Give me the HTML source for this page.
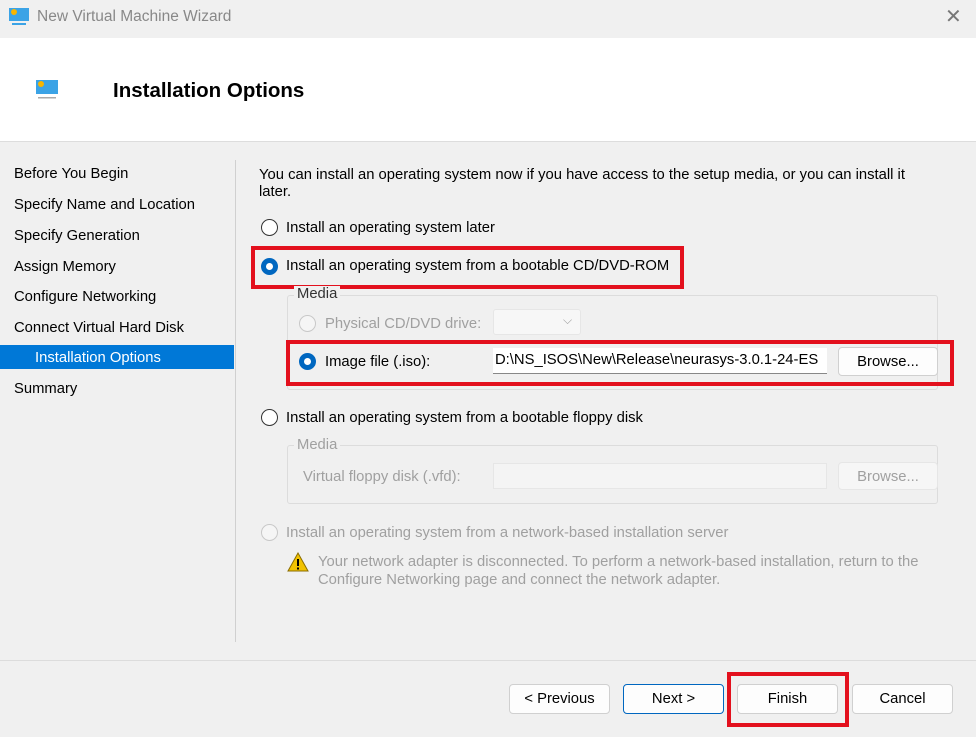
<!DOCTYPE html>
<html><head><meta charset="utf-8"><style>
*{margin:0;padding:0;box-sizing:border-box}
body{width:976px;height:737px;background:#f0f0f0;font-family:"Liberation Sans",sans-serif;font-size:14.8px;color:#000;position:relative;overflow:hidden}
.a{position:absolute;white-space:nowrap}
.g{color:#a0a0a0}
.rad{position:absolute;width:17px;height:17px;border-radius:50%;border:1.5px solid #333;background:#fff}
.rad.on{border:5px solid #0067c0}
.rad.dis{border-color:#c8c8c8;background:#f5f5f5}
.btn{position:absolute;height:30px;background:#fdfdfd;border:1px solid #d0d0d0;border-radius:4px;text-align:center;line-height:28px}
.red{position:absolute;border:4px solid #e3101d}
.box{position:absolute;border:1px solid #dcdcdc;border-radius:3px}
</style></head><body>
<svg class="a" style="left:8px;top:7px" width="22" height="20"><rect x="1" y="1" width="20" height="13" fill="#3ba3e6"/><circle cx="6" cy="5" r="3" fill="#f7b500"/><rect x="4" y="16" width="14" height="2" fill="#3ba3e6"/></svg>
<div class="a" style="left:37px;top:8px;color:#888;font-size:15.5px">New Virtual Machine Wizard</div>
<div class="a" style="left:945px;top:4px;color:#777;font-size:20px">✕</div>
<div class="a" style="left:0;top:38px;width:976px;height:104px;background:#fff;border-bottom:1px solid #ddd"></div>
<svg class="a" style="left:35px;top:79px" width="24" height="22"><rect x="1" y="1" width="22" height="14" fill="#3ba3e6"/><circle cx="6" cy="5" r="3" fill="#f7b500"/><rect x="3" y="18" width="18" height="1.5" fill="#aaa"/></svg>
<div class="a" style="left:113px;top:79px;font-size:20.5px;font-weight:bold">Installation Options</div>
<div class="a" style="left:14px;top:166px">Before You Begin</div>
<div class="a" style="left:14px;top:197px">Specify Name and Location</div>
<div class="a" style="left:14px;top:228px">Specify Generation</div>
<div class="a" style="left:14px;top:259px">Assign Memory</div>
<div class="a" style="left:14px;top:289px">Configure Networking</div>
<div class="a" style="left:14px;top:320px">Connect Virtual Hard Disk</div>
<div class="a" style="left:0;top:345px;width:234px;height:24px;background:#0078d7"></div>
<div class="a" style="left:35px;top:350px;color:#fff">Installation Options</div>
<div class="a" style="left:14px;top:381px">Summary</div>
<div class="a" style="left:235px;top:160px;width:1px;height:482px;background:#d0d0d0"></div>
<div class="a" style="left:259px;top:167px;line-height:17px">You can install an operating system now if you have access to the setup media, or you can install it<br>later.</div>
<div class="rad" style="left:261px;top:219px"></div>
<div class="a" style="left:286px;top:220px">Install an operating system later</div>
<div class="rad on" style="left:261px;top:258px"></div>
<div class="a" style="left:286px;top:258px">Install an operating system from a bootable CD/DVD-ROM</div>
<div class="red" style="left:251px;top:246px;width:433px;height:43px"></div>
<div class="box" style="left:287px;top:295px;width:651px;height:95px"></div>
<div class="a" style="left:294px;top:286px;background:#f0f0f0;padding:0 3px;color:#333">Media</div>
<div class="rad dis" style="left:299px;top:315px"></div>
<div class="a g" style="left:325px;top:316px">Physical CD/DVD drive:</div>
<div class="a" style="left:493px;top:309px;width:88px;height:26px;background:#f7f7f7;border:1px solid #e6e6e6;border-radius:3px"></div>
<div class="a g" style="left:563px;top:313px;font-size:12px">⌵</div>
<div class="rad on" style="left:299px;top:353px"></div>
<div class="a" style="left:325px;top:354px">Image file (.iso):</div>
<div class="a" style="left:493px;top:348px;width:334px;height:26px;background:#fff;border-bottom:1px solid #888;padding:4px 0 0 2px;overflow:hidden">D:\NS_ISOS\New\Release\neurasys-3.0.1-24-ES</div>
<div class="btn" style="left:838px;top:347px;width:100px;height:29px">Browse...</div>
<div class="red" style="left:286px;top:340px;width:668px;height:46px"></div>
<div class="rad" style="left:261px;top:409px"></div>
<div class="a" style="left:286px;top:410px">Install an operating system from a bootable floppy disk</div>
<div class="box" style="left:287px;top:445px;width:651px;height:59px"></div>
<div class="a g" style="left:294px;top:437px;background:#f0f0f0;padding:0 3px">Media</div>
<div class="a g" style="left:303px;top:469px">Virtual floppy disk (.vfd):</div>
<div class="a" style="left:493px;top:463px;width:334px;height:26px;background:#f4f4f4;border:1px solid #e6e6e6"></div>
<div class="btn g" style="left:838px;top:462px;width:100px;height:28px;background:#f6f6f6;border-color:#e6e6e6">Browse...</div>
<div class="rad dis" style="left:261px;top:524px"></div>
<div class="a g" style="left:286px;top:525px">Install an operating system from a network-based installation server</div>
<svg class="a" style="left:287px;top:552px" width="22" height="20"><path d="M11 1 L21 19 L1 19 Z" fill="#f2c200" stroke="#8a6d00" stroke-width="1"/><rect x="10" y="7" width="2" height="7" fill="#000"/><rect x="10" y="15.5" width="2" height="2" fill="#000"/></svg>
<div class="a g" style="left:318px;top:553px;line-height:18px">Your network adapter is disconnected. To perform a network-based installation, return to the<br>Configure Networking page and connect the network adapter.</div>
<div class="a" style="left:0;top:660px;width:976px;height:1px;background:#dcdcdc"></div>
<div class="btn" style="left:509px;top:684px;width:101px">&lt; Previous</div>
<div class="btn" style="left:623px;top:684px;width:101px;border-color:#0067c0">Next &gt;</div>
<div class="btn" style="left:737px;top:684px;width:101px">Finish</div>
<div class="red" style="left:727px;top:672px;width:122px;height:55px"></div>
<div class="btn" style="left:852px;top:684px;width:101px">Cancel</div>
</body></html>
